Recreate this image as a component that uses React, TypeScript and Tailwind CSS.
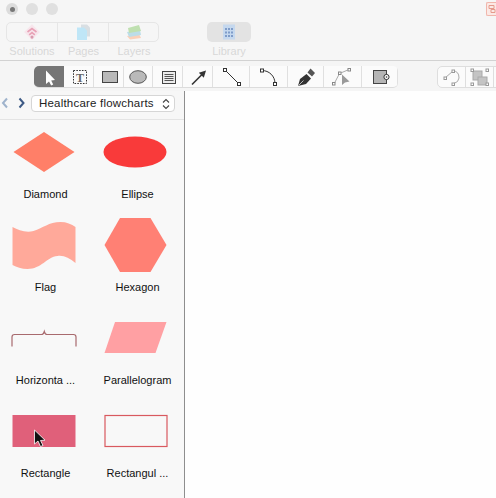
import React from "react";

const font = { fontFamily: '"Liberation Sans", Arial, sans-serif' };

function TopItem({ label, w, border, children }: { label: string; w: string; border: boolean; children: React.ReactNode }) {
  return (
    <div className={`flex flex-col items-center ${w}`}>
      <div className={`h-[20px] w-full flex items-center justify-center ${border ? "border-r border-[#e6e6e6]" : ""}`}>{children}</div>
      <div className="mt-[2px] text-[11px] leading-[14px] text-[#d8d8d8]">{label}</div>
    </div>
  );
}

const tools: { w: string; size: number; icon: React.ReactNode; active?: boolean }[] = [
  {
    w: "w-[30px]", size: 30, active: true,
    icon: <path d="M12 4.5 L12 18 L15 15.5 L17.2 19.5 L19.2 18.6 L17.2 14.6 L21 14 Z" fill="#fff" />,
  },
  {
    w: "w-[30px]", size: 30,
    icon: (
      <g>
        <rect x="9.5" y="4.5" width="13" height="13" fill="none" stroke="#333" strokeWidth="1" strokeDasharray="1.6 1.2" />
        <text x="16" y="15.5" textAnchor="middle" fontSize="12" fontWeight="700" fontFamily='"Liberation Serif", serif' fill="#666">T</text>
      </g>
    ),
  },
  { w: "w-[30px]", size: 30, icon: <rect x="8.5" y="5.5" width="15" height="11" fill="#b9b9b9" stroke="#444" /> },
  { w: "w-[29px]", size: 29, icon: <ellipse cx="14" cy="11" rx="8.3" ry="6.3" fill="#b9b9b9" stroke="#555" /> },
  {
    w: "w-[30px]", size: 30,
    icon: (
      <g stroke="#444" fill="none">
        <rect x="9.5" y="5.5" width="13" height="12" fill="#ececec" />
        <path d="M11.5 8.5h9M11.5 10.5h9M11.5 12.5h9M11.5 14.5h9" strokeWidth="0.9" />
      </g>
    ),
  },
  {
    w: "w-[30px]", size: 30,
    icon: (
      <g>
        <path d="M9 18.5 L19 8.5" stroke="#333" strokeWidth="1.6" />
        <path d="M23 4.5 L20.8 11.8 L15.8 6.8 Z" fill="#333" />
      </g>
    ),
  },
  {
    w: "w-[37px]", size: 37,
    icon: (
      <g stroke="#333" fill="#fff">
        <path d="M12 4 L26 18" strokeWidth="1" />
        <rect x="10.5" y="2.5" width="3" height="3" />
        <rect x="24.5" y="16.5" width="3" height="3" />
      </g>
    ),
  },
  {
    w: "w-[38px]", size: 38,
    icon: (
      <g stroke="#333" fill="#fff">
        <path d="M12 4.5 C19 4.5 25 10 25 17.5" fill="none" />
        <rect x="10.5" y="3" width="3" height="3" />
        <rect x="23.5" y="16.5" width="3" height="3" />
      </g>
    ),
  },
  {
    w: "w-[36px]", size: 36,
    icon: (
      <g>
        <path d="M10 20 L12 13 L18.5 8 L23 12.5 L18 18 Z" fill="#333" />
        <path d="M19.5 6.5 L22.5 2.5 L27 7 L24 10.5 Z" fill="#555" />
        <path d="M10.5 19.5 L15.5 14.5" stroke="#e0e0e0" strokeWidth="0.8" />
      </g>
    ),
  },
  {
    w: "w-[38px]", size: 38,
    icon: (
      <g>
        <path d="M10 18 L15.5 7.5 L25 3.5" fill="none" stroke="#aaa" />
        <rect x="8.5" y="16.5" width="2.5" height="2.5" fill="#fff" stroke="#888" />
        <rect x="14.5" y="6" width="2.5" height="2.5" fill="#fff" stroke="#888" />
        <rect x="24" y="2.5" width="2.5" height="2.5" fill="#fff" stroke="#888" />
        <path d="M18 8.5 L18 19 L21 16.5 L25.5 15.5 Z" fill="#9a9a9a" />
      </g>
    ),
  },
  {
    w: "w-[36px]", size: 36,
    icon: (
      <g>
        <rect x="11.5" y="4.5" width="13" height="13" fill="#b5b5b5" stroke="#444" />
        <circle cx="24.5" cy="11" r="2.6" fill="#fff" stroke="#333" />
        <circle cx="24.5" cy="11" r="0.8" fill="#333" />
      </g>
    ),
  },
];

const shapes: { label: string; shape: React.ReactNode }[] = [
  { label: "Diamond", shape: <path d="M30.5 12 L61 32 L30.5 52 L0 32 Z" fill="#ff7f68" /> },
  { label: "Ellipse", shape: <ellipse cx="29.5" cy="32" rx="31.5" ry="15.5" fill="#f93a3a" /> },
  {
    label: "Flag",
    shape: <path d="M-1 14 C5 17 12 20 20 18 C30 15 35 9 47 9 C53 9 58 11 62 14 L62 50 C56 45 50 42 44 43 C33 44 28 56 14 56 C8 56 3 54 -1 52 Z" fill="#ffa99a" />,
  },
  { label: "Hexagon", shape: <path d="M14.5 5 L45 5 L61 32 L45 59 L14.5 59 L-1 32 Z" fill="#ff8074" /> },
  {
    label: "Horizonta ...",
    shape: <path d="M-1.5 40.5 V31 Q-1.5 28.5 1 28.5 H28 Q30 28.5 30.8 25.5 Q31.6 28.5 33.5 28.5 H60 Q62.5 28.5 62.5 31 V40.5" fill="none" stroke="#a86a6e" strokeWidth="1.2" />,
  },
  { label: "Parallelogram", shape: <path d="M9.5 16 L61 16 L50 47 L-1 47 Z" fill="#ffa0a3" /> },
  { label: "Rectangle", shape: <rect x="-1" y="16" width="63" height="32" fill="#e0607a" /> },
  { label: "Rectangul ...", shape: <rect x="-0.5" y="16.5" width="62" height="31" fill="#f8f8f8" stroke="#d9595f" strokeWidth="1.2" /> },
];

export default function App() {
  return (
    <div className="relative w-[496px] h-[498px] overflow-hidden bg-[#fefefe]" style={font}>
      {/* window header */}
      <div className="h-[61px] bg-[#f6f6f6] border-b border-[#d2d2d2] relative">
        <div className="flex gap-2 pl-[6px] pt-[3px]">
          <div className="w-3 h-3 rounded-full bg-[#dcdcdc] flex items-center justify-center">
            <div className="w-[5px] h-[5px] rounded-full bg-[#777]" />
          </div>
          <div className="w-3 h-3 rounded-full bg-[#e0e0e0]" />
          <div className="w-3 h-3 rounded-full bg-[#e0e0e0]" />
        </div>
        <div className="flex mt-[7px] pl-[6px]">
          <div className="relative flex">
            <div className="absolute left-0 top-0 w-[153px] h-[20px] rounded-[5px] border border-[#e6e6e6]" />
            <TopItem label="Solutions" w="w-[52px]" border>
              <svg width="18" height="18" viewBox="0 0 16 16">
                <path d="M8 1 L15 8 L8 15 L1 8 Z" fill="#f7e6ec" />
                <path d="M4 8 L8 5 L12 8 M5.5 10.5 L8 8.5 L10.5 10.5" fill="none" stroke="#e8a2b6" strokeWidth="1.5" />
                <circle cx="8" cy="12.5" r="1.4" fill="#d99aae" />
              </svg>
            </TopItem>
            <TopItem label="Pages" w="w-[51px]" border>
              <svg width="16" height="17" viewBox="0 0 16 16">
                <path d="M6 0 H12 L15 3 V12 H6 Z" fill="#d9dfe3" />
                <path d="M2 3 H9 L12 6 V15.5 H2 Z" fill="#bfe6f7" />
              </svg>
            </TopItem>
            <TopItem label="Layers" w="w-[50px]" border={false}>
              <svg width="16" height="16" viewBox="0 0 16 16">
                <path d="M1 12 L13 10 L15 14 L4 15.5 Z" fill="#fbd0b8" />
                <path d="M1 8 L14 6 L15 11 L3 13 Z" fill="#bcdde8" />
                <path d="M2 4 L13 1 L15 7 L3 9 Z" fill="#bfe0b0" />
              </svg>
            </TopItem>
          </div>
          <div className="ml-[48px] w-[44px] flex flex-col items-center">
            <div className="w-[44px] h-[20px] rounded-[5px] bg-[#e3e3e3] flex items-center justify-center">
              <svg width="14" height="16" viewBox="0 0 14 16">
                <rect x="1" y="0.5" width="12" height="15" fill="#c5d8ee" />
                <g fill="#7f9cc9">
                  <rect x="3" y="4" width="2" height="2" /><rect x="6" y="4" width="2" height="2" /><rect x="9" y="4" width="2" height="2" />
                  <rect x="3" y="7.5" width="2" height="2" /><rect x="6" y="7.5" width="2" height="2" /><rect x="9" y="7.5" width="2" height="2" />
                  <rect x="3" y="11" width="2" height="2" /><rect x="6" y="11" width="2" height="2" /><rect x="9" y="11" width="2" height="2" />
                </g>
              </svg>
            </div>
            <div className="mt-[2px] text-[11px] leading-[14px] text-[#d8d8d8]">Library</div>
          </div>
        </div>
        {/* corner badge */}
        <div className="absolute right-0 top-[2px] w-[10px] h-[14px] rounded-l-[2px] border border-r-0 border-[#f0b6ac] bg-[#fbe9e5]">
          <svg width="9" height="12" viewBox="0 0 9 12">
            <path d="M2 2.5h5v3H2zM4 6.5h4v3H4z" fill="none" stroke="#e59a8c" />
          </svg>
        </div>
      </div>

      {/* tools bar */}
      <div className="h-[30px] bg-[#f5f5f5] flex pl-[34px] pt-[5px] gap-[39px]">
        <div className="flex h-[22px] shrink-0 rounded-[5px] border-b border-[#dcdcdc] bg-[#fbfbfb] overflow-hidden">
          {tools.map((t, i) => (
            <div key={i} className={`relative shrink-0 ${t.w} h-[22px] ${t.active ? "bg-[#767676]" : "border-r border-[#e0e0e0]"}`}>
              <svg width={t.size} height="22" viewBox={`0 0 ${t.size} 22`} className="absolute left-0 top-0">{t.icon}</svg>
            </div>
          ))}
        </div>
        <div className="flex h-[22px] rounded-[5px] border border-[#dedede] bg-[#fbfbfb] w-[90px] shrink-0">
          <div className="w-[28px] border-r border-[#dedede] shrink-0">
            <svg width="28" height="20" viewBox="0 0 28 20" className="block">
              <path d="M7 11 L15 4 Q21 4 21 11 Q21 15 15 17" fill="none" stroke="#aaa" />
              <rect x="6" y="10" width="2.5" height="2.5" fill="#fff" stroke="#999" />
              <rect x="14" y="3" width="2.5" height="2.5" fill="#fff" stroke="#999" />
              <rect x="14" y="16" width="2.5" height="2.5" fill="#fff" stroke="#999" />
            </svg>
          </div>
          <div className="w-[28px] border-r border-[#dedede] shrink-0">
            <svg width="28" height="20" viewBox="0 0 28 20" className="block">
              <rect x="7" y="4" width="9" height="9" fill="#c4c4c4" stroke="#aaa" />
              <rect x="12" y="10" width="9" height="8" fill="#c4c4c4" stroke="#aaa" />
              <rect x="5" y="2" width="2.5" height="2.5" fill="#fff" stroke="#999" />
              <rect x="20" y="2" width="2.5" height="2.5" fill="#fff" stroke="#999" />
              <rect x="5" y="16" width="2.5" height="2.5" fill="#fff" stroke="#999" />
              <rect x="20" y="16" width="2.5" height="2.5" fill="#fff" stroke="#999" />
            </svg>
          </div>
        </div>
      </div>

      {/* body */}
      <div className="w-[185px] h-[407px] bg-[#f8f8f8] border-r border-[#8e8e8e]">
        <div className="h-[29px] flex items-start pt-[4px] border-b border-[#e4e4e4] bg-[#f7f7f7]">
          <svg width="10" height="16" viewBox="0 0 10 16" className="ml-0 shrink-0">
            <path d="M7 3.5 L3 8 L7 12.5" fill="none" stroke="#9fb3cc" strokeWidth="2" />
          </svg>
          <svg width="10" height="16" viewBox="0 0 10 16" className="ml-[7px] shrink-0">
            <path d="M2.5 3.5 L6.5 8 L2.5 12.5" fill="none" stroke="#3d5a85" strokeWidth="2" />
          </svg>
          <div className="ml-[4px] w-[144px] h-[17px] rounded-[4px] border border-[#d6d6d6] bg-white flex items-center justify-between pl-[7px] pr-[4px] text-[11.5px] tracking-[0.2px] text-[#222]">
            <span>Healthcare flowcharts</span>
            <svg width="8" height="12" viewBox="0 0 8 12">
              <path d="M1 4.5 L4 1.5 L7 4.5 M1 7.5 L4 10.5 L7 7.5" fill="none" stroke="#444" strokeWidth="1.1" />
            </svg>
          </div>
        </div>
        <div className="grid grid-cols-[90px_94px]">
          {shapes.map((s) => (
            <div key={s.label} className="h-[93px] flex flex-col items-center">
              <svg width="64" height="64" viewBox="0 0 64 64" className="overflow-visible block translate-x-[0.5px]">{s.shape}</svg>
              <div className="mt-[3px] text-[11px] leading-[14px] text-[#111] whitespace-nowrap translate-x-[0.5px]">{s.label}</div>
            </div>
          ))}
        </div>
      </div>

      {/* mouse pointer */}
      <svg width="14" height="20" viewBox="0 0 14 20" className="absolute left-[33px] top-[429px]">
        <path d="M1.5 1 L1.5 15 L5 12 L7.5 17.5 L10 16.5 L7.5 11.5 L12 11.2 Z" fill="#111" stroke="#fff" strokeWidth="0.8" />
      </svg>
    </div>
  );
}
